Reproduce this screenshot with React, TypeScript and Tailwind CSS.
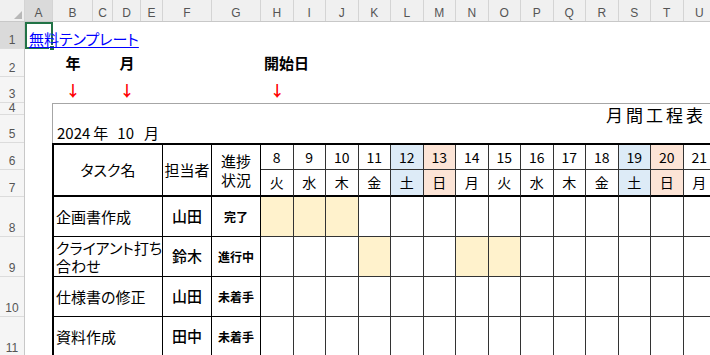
import React from "react";

type Day = { d: number; w: string; kind?: "sat" | "sun" };

const days: Day[] = [
  { d: 8, w: "火" },
  { d: 9, w: "水" },
  { d: 10, w: "木" },
  { d: 11, w: "金" },
  { d: 12, w: "土", kind: "sat" },
  { d: 13, w: "日", kind: "sun" },
  { d: 14, w: "月" },
  { d: 15, w: "火" },
  { d: 16, w: "水" },
  { d: 17, w: "木" },
  { d: 18, w: "金" },
  { d: 19, w: "土", kind: "sat" },
  { d: 20, w: "日", kind: "sun" },
  { d: 21, w: "月" },
];

const tasks = [
  { name: ["企画書作成"], who: "山田", status: "完了", filled: [0, 1, 2] },
  { name: ["クライアント打ち", "合わせ"], who: "鈴木", status: "進行中", filled: [3, 6, 7] },
  { name: ["仕様書の修正"], who: "山田", status: "未着手", filled: [] as number[] },
  { name: ["資料作成"], who: "田中", status: "未着手", filled: [] as number[] },
];

const columns = [
  { label: "A", w: "w-[28px]", sel: true },
  { label: "B", w: "w-[40px]" },
  { label: "C", w: "w-[20px]" },
  { label: "D", w: "w-[28px]" },
  { label: "E", w: "w-[22px]" },
  { label: "F", w: "w-[49px]" },
  { label: "G", w: "w-[49px]" },
  ...["H", "I", "J", "K", "L", "M", "N", "O", "P", "Q", "R", "S", "T", "U"].map((l) => ({
    label: l,
    w: "w-[32.5px]",
  })),
];

const rows = [
  { n: 1, h: "h-[27px] pb-[2px]", sel: true },
  { n: 2, h: "h-[28px] pb-[2px]" },
  { n: 3, h: "h-[26px] pb-[2px]" },
  { n: 4, h: "h-[12px] pb-0" },
  { n: 5, h: "h-[28px] pb-[2px]" },
  { n: 6, h: "h-[27px] pb-[2px]" },
  { n: 7, h: "h-[27px] pb-[2px]" },
  { n: 8, h: "h-[40px] pb-[2px]" },
  { n: 9, h: "h-[40px] pb-[2px]" },
  { n: 10, h: "h-[40px] pb-[2px]" },
  { n: 11, h: "h-[40px] pb-[2px]" },
];

const dayBg = (k?: "sat" | "sun") =>
  k === "sat" ? "bg-[#ddebf7]" : k === "sun" ? "bg-[#fce4d6]" : "bg-white";

export default function App() {
  return (
    <div className="w-[710px] h-[355px] overflow-hidden bg-white text-black font-['Noto_Sans_CJK_JP','Noto_Sans',sans-serif] [font-feature-settings:'palt']">
      {/* column letters */}
      <div className="flex h-[22px] w-max border-b border-[#c8c8c8] bg-[#f0f0f0] font-['Liberation_Sans',sans-serif] text-[12px] text-[#555]">
        <div className="relative w-[25px] shrink-0 border-r border-[#d4d4d4]">
          <svg className="absolute right-[2px] bottom-[2px]" width="8" height="8" viewBox="0 0 8 8">
            <polygon points="8,0 8,8 0,8" fill="#b8b8b8" />
          </svg>
        </div>
        {columns.map((c) => (
          <div
            key={c.label}
            className={`${c.w} shrink-0 flex items-center justify-center pt-[5px] border-r border-[#d4d4d4] ${
              c.sel ? "bg-[#dadada]" : ""
            }`}
          >
            {c.label}
          </div>
        ))}
      </div>

      <div className="flex">
        {/* row numbers */}
        <div className="w-[25px] shrink-0 flex flex-col bg-[#f5f5f5] border-r border-[#c8c8c8] font-['Liberation_Sans',sans-serif] text-[12px] text-[#555]">
          {rows.map((r) => (
            <div
              key={r.n}
              className={`${r.h} shrink-0 flex items-end justify-center leading-[11px] border-b border-[#dcdcdc] ${
                r.sel ? "bg-[#dadada]" : ""
              }`}
            >
              {r.n}
            </div>
          ))}
        </div>

        {/* sheet */}
        <div className="flex-1 flex flex-col">
          <div className="grid grid-cols-[28px_40px_20px_28px_22px_49px_49px_repeat(14,32.5px)] grid-rows-[27px_28px_26px]">
            <div className="relative col-start-1 row-start-1 flex items-end pb-[3px] pl-[4px]">
              <a href="#" className="whitespace-nowrap text-[15px] leading-none text-[#0000ff] underline underline-offset-2 relative z-10">
                無料テンプレート
              </a>
              <div className="absolute inset-0 border-2 border-[#217346] pointer-events-none">
                <div className="absolute -right-[4px] -bottom-[4px] w-[6px] h-[6px] bg-[#217346] border border-white" />
              </div>
            </div>
            <div className="col-start-2 row-start-2 flex items-center justify-center text-[15px] font-bold">年</div>
            <div className="col-start-4 row-start-2 flex items-center justify-center text-[15px] font-bold">月</div>
            <div className="col-start-8 row-start-2 flex items-center pl-[3px] whitespace-nowrap text-[15px] font-bold">
              開始日
            </div>
            <div className="col-start-2 row-start-3 flex items-center justify-center text-[15px] font-bold text-[#ff0000]">↓</div>
            <div className="col-start-4 row-start-3 flex items-center justify-center text-[15px] font-bold text-[#ff0000]">↓</div>
            <div className="col-start-8 row-start-3 flex items-center justify-center text-[15px] font-bold text-[#ff0000]">↓</div>
          </div>

          <div className="ml-[27px]">
            {/* title block */}
            <div className="h-[40px] border-t border-l border-[#a6a6a6] flex justify-between pl-[4px] pr-[10px]">
              <div className="self-end pb-[3px] flex text-[15px] leading-none whitespace-nowrap">
                <span>2024</span>
                <span className="ml-[3px]">年</span>
                <span className="ml-[9px]">10</span>
                <span className="ml-[10px]">月</span>
              </div>
              <div className="pt-[2px] text-[17px] leading-none tracking-[3px] whitespace-nowrap">月間工程表</div>
            </div>

            {/* schedule table */}
            <div className="grid w-max grid-cols-[109px_49px_49px_repeat(14,32.5px)] grid-rows-[25px_27px_40px_40px_40px_40px] border-t-2 border-l-2 border-black">
              <div className="row-span-2 border-r border-b-2 border-black flex items-center justify-center text-[15px]">タスク名</div>
              <div className="row-span-2 border-r border-b-2 border-black flex items-center justify-center text-[15px]">担当者</div>
              <div className="row-span-2 border-r border-b-2 border-black flex flex-col items-center justify-center text-[15px] leading-[19px]">
                <span>進捗</span>
                <span>状況</span>
              </div>
              {days.map((d) => (
                <div
                  key={`n${d.d}`}
                  className={`${dayBg(d.kind)} border-r border-b border-[#333] flex items-center justify-center text-[14px]`}
                >
                  {d.d}
                </div>
              ))}
              {days.map((d) => (
                <div
                  key={`w${d.d}`}
                  className={`${dayBg(d.kind)} border-r border-[#333] border-b-2 border-b-black flex items-center justify-center text-[14px]`}
                >
                  {d.w}
                </div>
              ))}
              {tasks.map((t, ti) => (
                <React.Fragment key={ti}>
                  <div className="border-r border-b border-black flex flex-col justify-center pl-[2px] text-[15px] leading-[18px] whitespace-nowrap">
                    {t.name.map((n) => (
                      <span key={n}>{n}</span>
                    ))}
                  </div>
                  <div className="border-r border-b border-black flex items-center justify-center text-[15px] font-medium">
                    {t.who}
                  </div>
                  <div className="border-r border-b border-black flex items-center justify-center text-[12px] font-bold">
                    {t.status}
                  </div>
                  {days.map((d, di) => (
                    <div
                      key={d.d}
                      className={`border-r border-b border-[#333] ${
                        t.filled.includes(di) ? "bg-[#fff2cc]" : "bg-white"
                      }`}
                    />
                  ))}
                </React.Fragment>
              ))}
            </div>
          </div>
        </div>
      </div>
    </div>
  );
}
